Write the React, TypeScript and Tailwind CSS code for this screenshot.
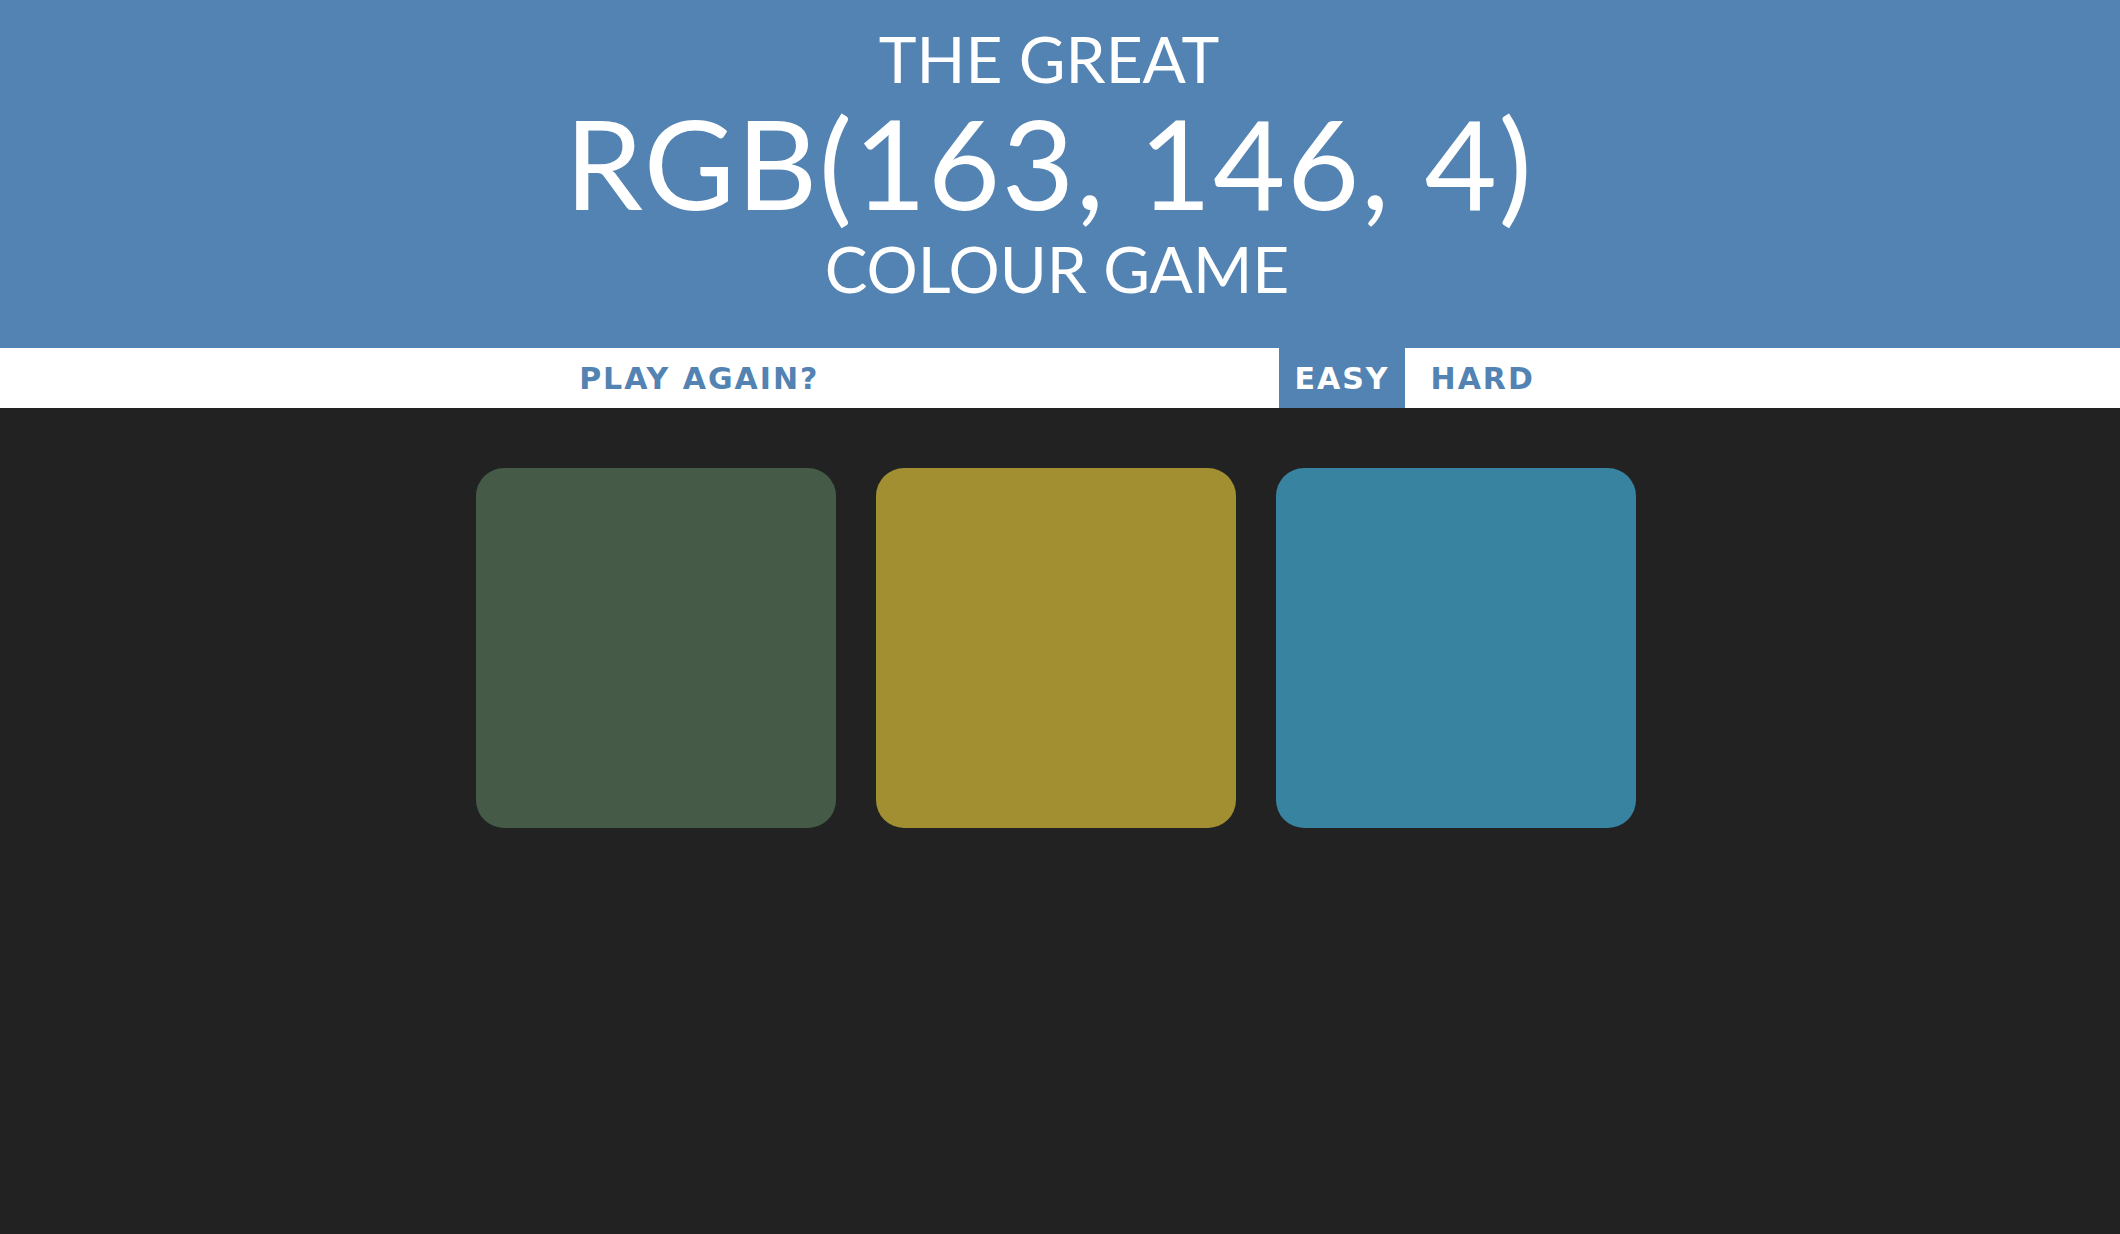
import { useState } from "react";

const squares = ["#455b48", "#a18f31", "#3883a0"];

const btn =
  "px-[15px] font-['DejaVu_Sans',sans-serif] text-[30px] font-bold uppercase tracking-[2px]";

export default function App() {
  const [mode, setMode] = useState<"easy" | "hard">("easy");

  return (
    <div className="min-h-[1234px] bg-[#222222] font-['Lato',sans-serif]">
      <h1 className="bg-[#5383b2] pt-[26px] pb-[42px] text-center font-normal uppercase text-white">
        <div className="pr-[22px] text-[64px] leading-[66px]">The Great</div>
        <div className="pr-[22px] text-[125px] leading-[140px] tracking-[1.5px]">
          RGB(163, 146, 4)
        </div>
        <div className="pr-[6px] text-[64px] leading-[74px]">Colour Game</div>
      </h1>

      {/* stripe */}
      <div className="flex h-[60px] items-stretch justify-center bg-white pr-[6px]">
        <button className={`${btn} text-[#5383b2]`}>Play again?</button>
        <span className="inline-block w-[445px]" />
        <button
          onClick={() => setMode("easy")}
          className={
            mode === "easy"
              ? `${btn} bg-[#5383b2] text-white`
              : `${btn} text-[#5383b2]`
          }
        >
          Easy
        </button>
        <button
          onClick={() => setMode("hard")}
          className={
            mode === "hard"
              ? `${btn} ml-[11px] bg-[#5383b2] text-white`
              : `${btn} ml-[11px] text-[#5383b2]`
          }
        >
          Hard
        </button>
      </div>

      <div className="mx-auto mt-[60px] flex w-[1168px] gap-10">
        {squares.map((c) => (
          <div
            key={c}
            className="h-[360px] w-[360px] rounded-[28px]"
            style={{ backgroundColor: c }}
          />
        ))}
      </div>
    </div>
  );
}
